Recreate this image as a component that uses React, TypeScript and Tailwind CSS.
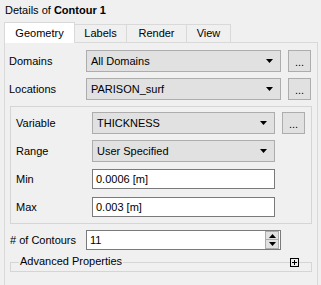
import React from 'react';

const font = { fontFamily: '"Liberation Sans", Arial, sans-serif' };

function Arrow() {
  return (
    <svg width="7" height="4" viewBox="0 0 7 4" className="shrink-0">
      <path d="M0 0h7L3.5 4z" fill="#000" />
    </svg>
  );
}

function Combo({ value, width }: { value: string; width: string }) {
  return (
    <div
      className={`${width} h-[22px] flex items-center justify-between pl-[4px] pr-[7px] bg-[#e1e1e1] border border-[#adadad]`}
    >
      <span>{value}</span>
      <Arrow />
    </div>
  );
}

function DotsButton() {
  return (
    <div className="w-[23px] h-[22px] flex items-end justify-center pb-[3px] bg-[#e1e1e1] border border-[#adadad] leading-none">
      ...
    </div>
  );
}

function Input({ value }: { value: string }) {
  return (
    <div className="w-[183px] h-[20px] flex items-center pl-[3px] bg-white border border-[#7a7a7a]">
      {value}
    </div>
  );
}

export default function App() {
  const tabs = [
    { name: 'Labels', w: 'w-[52px]' },
    { name: 'Render', w: 'w-[60px]' },
    { name: 'View', w: 'w-[44px]' },
  ];

  return (
    <div
      className="w-[321px] h-[285px] overflow-hidden bg-[#f0f0f0] text-[11px] text-black leading-[13px]"
      style={font}
    >
      <div className="h-[22px] pl-[5px] pt-[4px]">
        Details of <span className="font-bold">Contour 1</span>
      </div>

      <div className="flex pl-[4px] items-start">
        <div className="w-[71px] h-[21px] bg-white border border-b-0 border-[#d9d9d9] flex items-center justify-center relative z-10">
          Geometry
        </div>
        {tabs.map((t) => (
          <div
            key={t.name}
            className={`${t.w} h-[18px] mt-[2px] border border-l-0 border-b-0 border-[#d9d9d9] flex items-center justify-center`}
          >
            {t.name}
          </div>
        ))}
      </div>

      <div className="ml-[4px] w-[314px] h-[260px] -mt-[1px] border border-[#d9d9d9] bg-[#f0f0f0] pt-[7px]">
        <div className="flex items-center pl-[4px]">
          <span className="w-[77px]">Domains</span>
          <Combo value="All Domains" width="w-[195px]" />
          <div className="ml-[7px]">
            <DotsButton />
          </div>
        </div>

        <div className="flex items-center pl-[4px] mt-[6px]">
          <span className="w-[77px]">Locations</span>
          <Combo value="PARISON_surf" width="w-[195px]" />
          <div className="ml-[7px]">
            <DotsButton />
          </div>
        </div>

        <div className="ml-[5px] mt-[6px] w-[302px] border border-[#d5d5d5] pt-[5px] pb-[6px] pl-[5px]">
          <div className="flex items-center">
            <span className="w-[76px]">Variable</span>
            <Combo value="THICKNESS" width="w-[183px]" />
            <div className="ml-[7px]">
              <DotsButton />
            </div>
          </div>
          <div className="flex items-center mt-[6px]">
            <span className="w-[76px]">Range</span>
            <Combo value="User Specified" width="w-[183px]" />
          </div>
          <div className="flex items-center mt-[7px]">
            <span className="w-[76px]">Min</span>
            <Input value="0.0006 [m]" />
          </div>
          <div className="flex items-center mt-[8px]">
            <span className="w-[76px]">Max</span>
            <Input value="0.003 [m]" />
          </div>
        </div>

        <div className="flex items-center pl-[5px] mt-[6px]">
          <span className="w-[76px]"># of Contours</span>
          <div className="w-[195px] h-[20px] flex items-center justify-between pl-[3px] pr-[1px] bg-white border border-[#7a7a7a]">
            <span>11</span>
            <div className="flex flex-col">
              <div className="w-[14px] h-[9px] bg-[#e1e1e1] border border-[#adadad] flex items-center justify-center">
                <svg width="7" height="4" viewBox="0 0 7 4">
                  <path d="M0 4h7L3.5 0z" fill="#000" />
                </svg>
              </div>
              <div className="w-[14px] h-[9px] bg-[#e1e1e1] border border-[#adadad] border-t-0 flex items-center justify-center">
                <svg width="7" height="4" viewBox="0 0 7 4">
                  <path d="M0 0h7L3.5 4z" fill="#000" />
                </svg>
              </div>
            </div>
          </div>
        </div>

        <div className="ml-[5px] mt-[12px] w-[302px] h-[10px] border border-[#d5d5d5] relative">
          <span className="absolute left-[8px] -top-[8px] px-[1px] bg-[#f0f0f0]">
            Advanced Properties
          </span>
          <div className="absolute left-[279px] -top-[5px] w-[9px] h-[9px] border border-black bg-[#f0f0f0] flex items-center justify-center">
            <svg width="7" height="7" viewBox="0 0 7 7">
              <path d="M3.5 1v5M1 3.5h5" stroke="#000" strokeWidth="1" />
            </svg>
          </div>
        </div>
      </div>
    </div>
  );
}
